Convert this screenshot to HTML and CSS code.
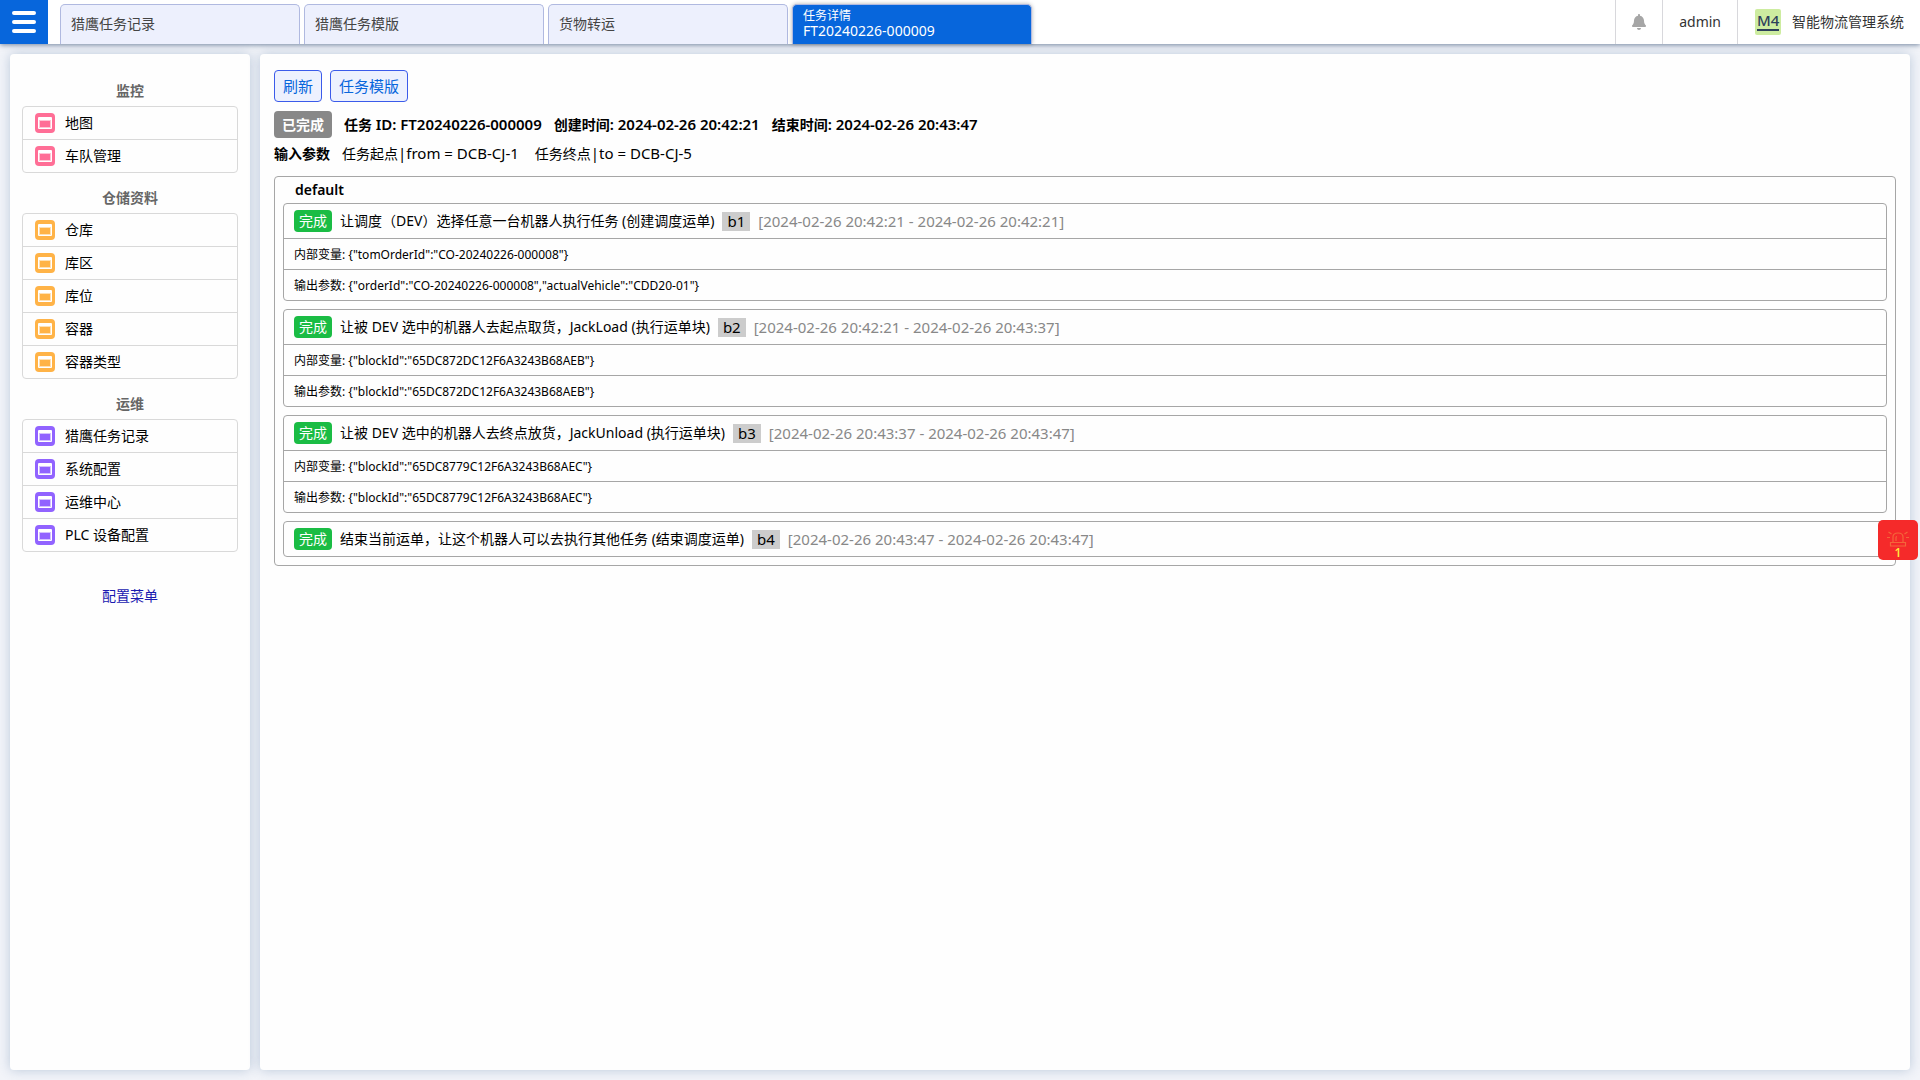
FILE: index.html
```html
<!DOCTYPE html>
<html lang="zh-CN">
<head>
<meta charset="utf-8">
<meta name="viewport" content="width=device-width, initial-scale=1">
<title>智能物流管理系统</title>
<link rel="stylesheet" href="styles.css">
</head>
<body>
<svg class="defs" aria-hidden="true">
  <symbol id="icon-window" viewBox="0 0 20 20">
    <rect width="20" height="20" rx="4" fill="currentColor"/>
    <rect x="3" y="4" width="14" height="12" rx="1" fill="#fff"/>
    <rect x="4" y="7" width="12" height="8" fill="currentColor" fill-opacity=".4"/>
    <rect x="5" y="8" width="10" height="6" fill="currentColor"/>
  </symbol>
</svg>

<header class="topbar">
  <button class="menu-button" type="button" aria-label="菜单">
    <svg width="24" height="24" viewBox="0 0 24 24" stroke="#fff" stroke-width="4" stroke-linecap="round"><path d="M2 3h20M2 12h20M2 21h20"/></svg>
  </button>
  <nav class="tabs">
    <a class="tab" href="#records">猎鹰任务记录</a>
    <a class="tab" href="#templates">猎鹰任务模版</a>
    <a class="tab" href="#transfer">货物转运</a>
    <a class="tab tab-active" href="#detail"><small class="tab-kind">任务详情</small><span class="tab-id">FT20240226-000009</span></a>
  </nav>
  <button class="top-cell bell" type="button" aria-label="通知">
    <svg width="14" height="16" viewBox="0 0 448 512" fill="#a6a6a6"><path d="M224 512c35.300 0 64-28.700 64-64H160c0 35.300 28.700 64 64 64zm215.400-149.700c-19.300-20.800-55.500-52-55.500-154.300 0-77.700-54.500-139.900-127.900-155.200V32c0-17.700-14.300-32-32-32s-32 14.300-32 32v20.800C118.600 68.100 64.100 130.300 64.100 208c0 102.300-36.200 133.500-55.500 154.300-6 6.400-8.700 14.100-8.600 21.700.1 16.400 13 32 32.100 32h383.800c19.100 0 32-15.600 32.100-32 0-7.600-2.700-15.300-8.600-21.700z"/></svg>
  </button>
  <button class="top-cell user" type="button">admin</button>
  <div class="top-cell brand"><span class="logo"><span class="logo-text">M4</span></span><span>智能物流管理系统</span></div>
</header>

<div class="workspace">
  <aside class="panel sidebar">
    <h2 class="menu-title">监控</h2>
    <nav class="menu menu-pink">
      <a href="#map"><svg><use href="#icon-window"/></svg>地图</a>
      <a href="#fleet"><svg><use href="#icon-window"/></svg>车队管理</a>
    </nav>
    <h2 class="menu-title">仓储资料</h2>
    <nav class="menu menu-orange">
      <a href="#warehouse"><svg><use href="#icon-window"/></svg>仓库</a>
      <a href="#area"><svg><use href="#icon-window"/></svg>库区</a>
      <a href="#location"><svg><use href="#icon-window"/></svg>库位</a>
      <a href="#container"><svg><use href="#icon-window"/></svg>容器</a>
      <a href="#container-type"><svg><use href="#icon-window"/></svg>容器类型</a>
    </nav>
    <h2 class="menu-title">运维</h2>
    <nav class="menu menu-purple">
      <a href="#records"><svg><use href="#icon-window"/></svg>猎鹰任务记录</a>
      <a href="#config"><svg><use href="#icon-window"/></svg>系统配置</a>
      <a href="#ops"><svg><use href="#icon-window"/></svg>运维中心</a>
      <a href="#plc"><svg><use href="#icon-window"/></svg>PLC 设备配置</a>
    </nav>
    <a class="menu-config" href="#menu">配置菜单</a>
  </aside>

  <main class="panel content">
    <div class="actions">
      <button type="button">刷新</button>
      <button type="button">任务模版</button>
    </div>
    <div class="summary">
      <span class="status">已完成</span>
      <span>任务 <span class="value">ID: FT20240226-000009</span></span>
      <span>创建时间<span class="value">: 2024-02-26 20:42:21</span></span>
      <span>结束时间<span class="value">: 2024-02-26 20:43:47</span></span>
    </div>
    <div class="params">
      <strong>输入参数</strong>
      <span class="param">任务起点<span class="value">|from = DCB-CJ-1</span></span>
      <span class="param">任务终点<span class="value">|to = DCB-CJ-5</span></span>
    </div>

    <section class="group">
      <h3>default</h3>
      <article class="block">
        <div class="block-head"><span class="done">完成</span><span>让调度（DEV）选择任意一台机器人执行任务 (创建调度运单)</span><span class="block-id">b1</span><time>[2024-02-26 20:42:21 - 2024-02-26 20:42:21]</time></div>
        <div class="block-row">内部变量: {"tomOrderId":"CO-20240226-000008"}</div>
        <div class="block-row">输出参数: {"orderId":"CO-20240226-000008","actualVehicle":"CDD20-01"}</div>
      </article>
      <article class="block">
        <div class="block-head"><span class="done">完成</span><span>让被 DEV 选中的机器人去起点取货，JackLoad (执行运单块)</span><span class="block-id">b2</span><time>[2024-02-26 20:42:21 - 2024-02-26 20:43:37]</time></div>
        <div class="block-row">内部变量: {"blockId":"65DC872DC12F6A3243B68AEB"}</div>
        <div class="block-row">输出参数: {"blockId":"65DC872DC12F6A3243B68AEB"}</div>
      </article>
      <article class="block">
        <div class="block-head"><span class="done">完成</span><span>让被 DEV 选中的机器人去终点放货，JackUnload (执行运单块)</span><span class="block-id">b3</span><time>[2024-02-26 20:43:37 - 2024-02-26 20:43:47]</time></div>
        <div class="block-row">内部变量: {"blockId":"65DC8779C12F6A3243B68AEC"}</div>
        <div class="block-row">输出参数: {"blockId":"65DC8779C12F6A3243B68AEC"}</div>
      </article>
      <article class="block">
        <div class="block-head"><span class="done">完成</span><span>结束当前运单，让这个机器人可以去执行其他任务 (结束调度运单)</span><span class="block-id">b4</span><time>[2024-02-26 20:43:47 - 2024-02-26 20:43:47]</time></div>
      </article>
    </section>
  </main>
</div>

<button class="alarm" type="button" aria-label="告警">
  <svg width="24" height="18" viewBox="0 0 24 18" fill="none" stroke="#f4663a" stroke-width="1.200"><path d="M7 12V7q0-4 5-4t5 4v5M4.500 12.500h15v3.500h-15zM10 11V7.500q0-1 1-1M1 7.500h3M20 7.500h3M2.500 2l3 2M21.500 2l-3 2"/></svg>
  <span>1</span>
</button>
</body>
</html>
```

FILE: styles.css
```css
* { box-sizing: border-box; }

body {
  margin: 0;
  min-height: 100vh;
  display: flex;
  flex-direction: column;
  background: #f2f4f9;
  color: #000;
  font: 14px/20px "Noto Sans", "Noto Sans CJK SC", sans-serif;
}

a { color: inherit; text-decoration: none; }
button { font: inherit; cursor: pointer; }
.defs { display: none; }

/* Top bar */
.topbar {
  position: relative;
  display: flex;
  height: 44px;
  background: #fff;
  box-shadow: 0 1px 5px rgba(30, 60, 100, .6);
}
.menu-button {
  display: grid;
  place-items: center;
  width: 48px;
  padding: 0;
  border: 0;
  background: #0766dc;
}
.tabs {
  flex: 1;
  display: flex;
  gap: 4px;
  padding: 4px 0 0 12px;
}
.tab {
  display: flex;
  align-items: center;
  width: 240px;
  padding: 0 10px 2px;
  border: 1px solid #b0b9e0;
  border-bottom: 0;
  border-radius: 5px 5px 0 0;
  background: #edf0fd;
  color: #444;
}
.tab-active {
  flex-direction: column;
  align-items: flex-start;
  justify-content: center;
  background: #0766dc;
  color: #fff;
  box-shadow: 0 0 4px rgba(0, 0, 0, .3);
}
.tab-kind { font-size: 12px; line-height: 14px; }
.tab-id { line-height: 16px; }
.top-cell {
  display: flex;
  align-items: center;
  padding: 0 16px;
  border: 0;
  border-left: 1px solid #d8d8dc;
  background: none;
  color: #333;
}
.brand { gap: 11px; padding: 0 16px 0 17px; }
.logo {
  display: flex;
  justify-content: center;
  width: 26px;
  height: 26px;
  padding: 2px;
  border-radius: 2px;
  background: #cdeca0;
  color: #2d405b;
}
.logo-text {
  width: 100%;
  height: 20px;
  border-bottom: 2px solid #2d405b;
  font-size: 15px;
  font-weight: 500;
  line-height: 18px;
  text-align: center;
}

/* Panels */
.workspace {
  flex: 1;
  display: flex;
  gap: 10px;
  padding: 10px;
}
.panel {
  border-radius: 4px;
  background: #fefefe;
  box-shadow: 0 0 12px rgba(60, 100, 150, .3);
}

/* Sidebar */
.sidebar { flex: 0 0 240px; padding: 12px; }
.menu-title {
  margin: 0;
  padding-top: 10px;
  color: #666;
  font-size: 14px;
  font-weight: 600;
  line-height: 30px;
  text-align: center;
}
.menu {
  border: 1px solid #d9d9d9;
  border-radius: 4px;
}
.menu a {
  display: flex;
  align-items: center;
  gap: 10px;
  height: 32px;
  padding: 0 12px;
}
.menu a + a { height: 33px; border-top: 1px solid #d9d9d9; }
.menu svg { width: 20px; height: 20px; }
.menu-pink svg { color: #ff6e96; }
.menu-orange svg { color: #ffb347; }
.menu-purple svg { color: #9163ff; }
.menu-config {
  display: block;
  width: fit-content;
  margin: 34px auto 0;
  color: #1a1ab0;
}

/* Task detail */
.content { flex: 1; min-width: 0; padding: 16px 14px; }
.actions { display: flex; gap: 8px; }
.actions button {
  height: 32px;
  padding: 0 8px;
  border: 1px solid #3b5bea;
  border-radius: 4px;
  background: #edf1fe;
  color: #0766dc;
  font-size: 15px;
}
.summary {
  display: flex;
  align-items: center;
  gap: 12px;
  margin-top: 9px;
  font-weight: 600;
}
.value { font-size: 15px; line-height: 16px; }
.status {
  padding: 3px 8px;
  border-radius: 4px;
  background: #888;
  color: #fff;
  line-height: 21px;
}
.params {
  display: flex;
  gap: 12px;
  padding: 6px 0 12px;
}
.param { margin-right: 4px; }
.group {
  padding: 0 8px 8px;
  border: 1px solid #a6a6a6;
  border-radius: 4px;
}
.group h3 {
  margin: 0;
  padding-left: 12px;
  font-size: 14px;
  font-weight: 600;
  line-height: 26px;
}
.block {
  border: 1px solid #a6a6a6;
  border-radius: 4px;
}
.block + .block { margin-top: 8px; }
.block-head {
  display: flex;
  align-items: center;
  gap: 8px;
  height: 34px;
  padding: 0 10px;
}
.done {
  padding: 1px 5px;
  border-radius: 4px;
  background: #1abc44;
  color: #fff;
}
.block-id {
  padding: 0 5px;
  background: #ccc;
  font-size: 15px;
  line-height: 19px;
}
.block-head time { color: #888; font-size: 15px; }
.block-row {
  padding: 2px 10px 0;
  border-top: 1px solid #a6a6a6;
  font-size: 12px;
  line-height: 28px;
}

/* Floating alarm */
.alarm {
  position: fixed;
  right: 2px;
  top: 520px;
  display: flex;
  flex-direction: column;
  align-items: center;
  width: 40px;
  height: 40px;
  padding: 10px 0 0;
  border: 0;
  border-radius: 5px;
  background: #f52a2a;
  color: #ffe83b;
  font-size: 12px;
  font-weight: 600;
  line-height: 10px;
}
```
